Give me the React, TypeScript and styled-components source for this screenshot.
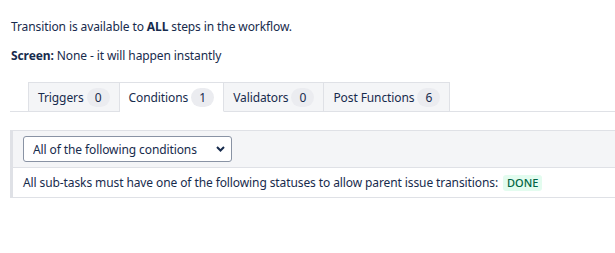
import React from "react";
import styled, { createGlobalStyle } from "styled-components";

const Global = createGlobalStyle`
  html, body { margin: 0; padding: 0; background: #fff; }
  body {
    font-family: "Noto Sans", "Liberation Sans", sans-serif;
    font-size: 12px;
    letter-spacing: -0.1px;
    color: #172b4d;
    overflow: hidden;
  }
`;

const Page = styled.div`
  padding: 17px 0 0 11px;
  display: flex;
  flex-direction: column;
`;

const Line = styled.p<{ $gap?: number }>`
  margin: 0 0 ${(p) => p.$gap ?? 0}px 0;
  line-height: 20px;
`;

const TabBar = styled.div`
  display: flex;
  margin: 16px 0 0 -1px;
  padding-left: 18px;
  border-bottom: 1px solid #dfe1e6;
`;

const Tab = styled.div<{ $active?: boolean }>`
  display: flex;
  align-items: center;
  gap: 3px;
  height: 30px;
  box-sizing: border-box;
  padding: 0 9px 0 9px;
  margin-bottom: -1px;
  background: ${(p) => (p.$active ? "#fff" : "#f4f5f7")};
  border: 1px solid #dfe1e6;
  border-bottom: 1px solid ${(p) => (p.$active ? "#fff" : "#dfe1e6")};
  & + & { border-left: none; }
`;

const Badge = styled.span`
  display: inline-flex;
  align-items: center;
  justify-content: center;
  min-width: 23px;
  height: 19px;
  padding: 0 4px;
  box-sizing: border-box;
  border-radius: 10px;
  background: #ebecf0;
  font-size: 12px;
  color: #172b4d;
`;

const Panel = styled.div`
  margin: 18px 0 0 -1px;
  border: 1px solid #dfe1e6;
  border-left: 3px solid #dfe1e6;
  border-right: none;
`;

const PanelHeader = styled.div`
  background: #f4f5f7;
  border-bottom: 1px solid #dfe1e6;
  padding: 5px 10px 5px 10px;
  display: flex;
`;

const SelectWrap = styled.div`
  position: relative;
  display: inline-flex;
`;

const Select = styled.select`
  appearance: none;
  width: 209px;
  height: 26px;
  padding: 0 0 0 9px;
  border: 1px solid #8993a4;
  border-radius: 3px;
  background: #fff;
  font-family: inherit;
  font-size: 12px;
  letter-spacing: -0.1px;
  color: #172b4d;
`;

const Chevron = styled.svg`
  position: absolute;
  right: 7px;
  top: 10px;
  pointer-events: none;
`;

const Row = styled.div`
  padding: 5px 10px 5px 10px;
  line-height: 19px;
  display: flex;
  align-items: center;
  white-space: nowrap;
`;

const Lozenge = styled.span`
  display: inline-flex;
  align-items: center;
  height: 16px;
  margin-left: 5px;
  padding: 0 4px;
  border-radius: 3px;
  background: #e3fcef;
  color: #006644;
  font-size: 11px;
  font-weight: 500;
  letter-spacing: 0;
`;

const tabs = [
  { label: "Triggers", count: 0 },
  { label: "Conditions", count: 1, active: true },
  { label: "Validators", count: 0 },
  { label: "Post Functions", count: 6 },
];

export default function App() {
  return (
    <>
      <Global />
      <Page>
        <Line $gap={9}>
          Transition is available to <b>ALL</b> steps in the workflow.
        </Line>
        <Line>
          <b>Screen:</b> None - it will happen instantly
        </Line>
        <TabBar>
          {tabs.map((t) => (
            <Tab key={t.label} $active={t.active}>
              {t.label}
              <Badge>{t.count}</Badge>
            </Tab>
          ))}
        </TabBar>
        <Panel>
          <PanelHeader>
            <SelectWrap>
              <Select defaultValue="all">
                <option value="all">All of the following conditions</option>
                <option value="any">Any of the following conditions</option>
              </Select>
              <Chevron width="9" height="6" viewBox="0 0 9 6">
                <path d="M1 1 L4.5 4.5 L8 1" fill="none" stroke="#172b4d" strokeWidth="2" />
              </Chevron>
            </SelectWrap>
          </PanelHeader>
          <Row>
            All sub-tasks must have one of the following statuses to allow parent issue transitions:
            <Lozenge>DONE</Lozenge>
          </Row>
        </Panel>
      </Page>
    </>
  );
}
